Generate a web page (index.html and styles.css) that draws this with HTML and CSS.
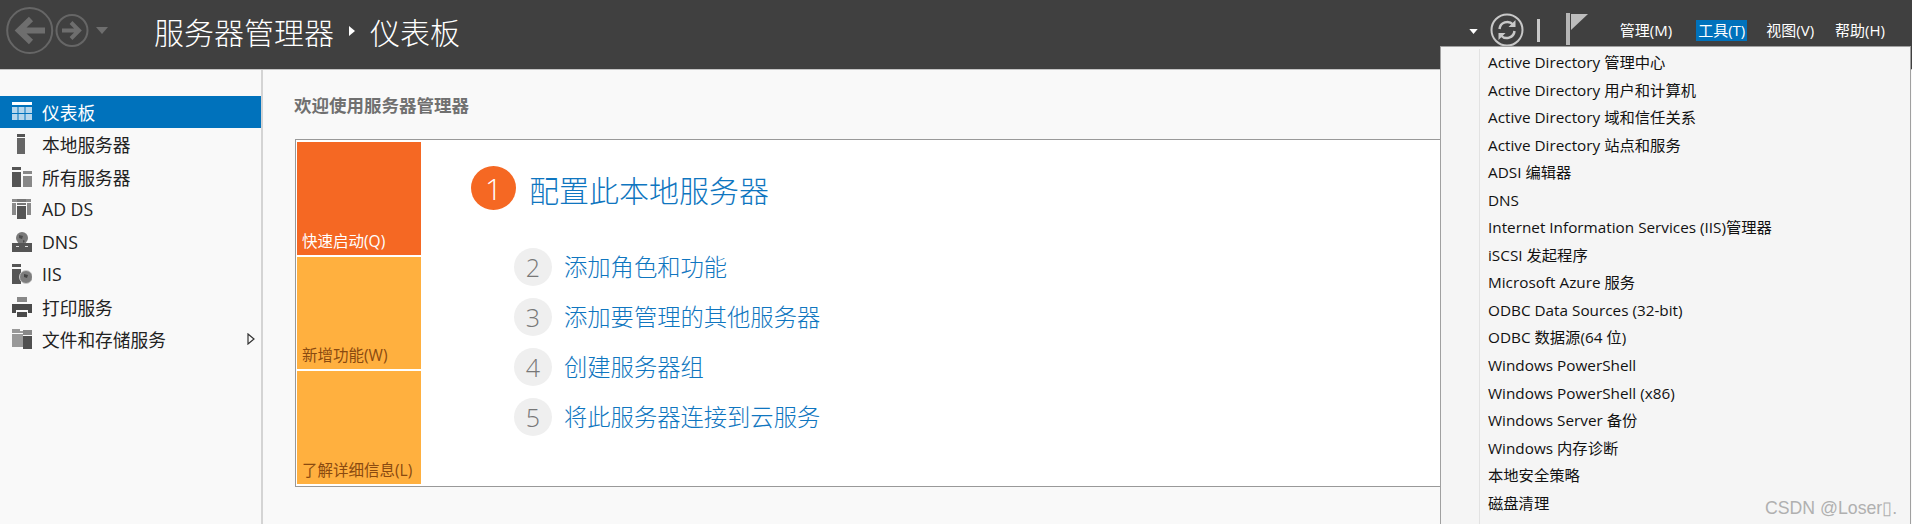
FILE: index.html
```html
<!DOCTYPE html>
<html lang="zh-CN">
<head>
<meta charset="utf-8">
<title>服务器管理器</title>
<link rel="stylesheet" href="styles.css">
</head>
<body>
<header class="topbar">
  <div class="nav-buttons">
    <svg class="ico-nav" width="120" height="69" viewBox="0 0 120 69">
      <circle cx="29.700" cy="30.500" r="22.500" fill="none" stroke="#666" stroke-width="2"/>
      <path d="M45 30.500H21M31 19L19 30.500 31 42" fill="none" stroke="#6e6e6e" stroke-width="6"/>
      <circle cx="72" cy="30.500" r="15.500" fill="none" stroke="#666" stroke-width="2"/>
      <path d="M62 30.500h17M71 22.500l8 8-8 8" fill="none" stroke="#6e6e6e" stroke-width="4"/>
      <path d="M96 27h12l-6 7z" fill="#6e6e6e"/>
    </svg>
  </div>
  <div class="crumbs">
    <span>服务器管理器</span>
    <svg class="crumb-arrow" width="8" height="12" viewBox="0 0 8 12"><path d="M1 1l6 5-6 5z" fill="#fff"/></svg>
    <span>仪表板</span>
  </div>
  <div class="actions">
    <svg class="act-drop" width="9" height="5" viewBox="0 0 10 6"><path d="M0 0h10L5 6z" fill="#fff"/></svg>
    <svg class="act-refresh" width="34" height="34" viewBox="0 0 34 34">
      <circle cx="17" cy="17" r="15.500" fill="none" stroke="#c8c8c8" stroke-width="2"/>
      <path d="M9.500 16a7.800 7.800 0 0 1 13.500-4.500M24.500 18a7.800 7.800 0 0 1-13.500 4.500" fill="none" stroke="#c8c8c8" stroke-width="2.500"/>
      <path d="M25.500 7v7h-7zM8.500 27v-7h7z" fill="#c8c8c8"/>
    </svg>
    <span class="act-sep"></span>
    <svg class="act-flag" width="22" height="32" viewBox="0 0 22 32"><path d="M0 0h4v32H0z" fill="#b5b5b5"/><path d="M5 1h17L5 17z" fill="#bdbdbd"/></svg>
    <nav class="menubar">
      <span class="menu-item">管理(M)</span>
      <span class="menu-item is-open">工具(T)</span>
      <span class="menu-item">视图(V)</span>
      <span class="menu-item">帮助(H)</span>
    </nav>
  </div>
</header>

<div class="body-row">
  <aside class="sidebar">
    <ul class="side-list">
      <li class="side-item is-active">
        <svg class="side-ico" width="20" height="20" viewBox="0 0 20 20"><path d="M0 0h20v3H0z" fill="#fff"/><path d="M0 5h5.500v6H0zM6.500 5h6v6h-6zM13.500 5H20v6h-6.500zM0 12h5.500v6H0zM6.500 12h6v6h-6zM13.500 12H20v6h-6.500z" fill="#b5d6ec"/></svg>
        <span>仪表板</span>
      </li>
      <li class="side-item">
        <svg class="side-ico" width="20" height="20" viewBox="0 0 20 20"><path d="M5 0h8v3H5z" fill="#555"/><path d="M5 4h8v16H5z" fill="#666"/></svg>
        <span>本地服务器</span>
      </li>
      <li class="side-item">
        <svg class="side-ico" width="20" height="20" viewBox="0 0 20 20"><path d="M0 0h9v3H0zM0 5h9v15H0z" fill="#555"/><path d="M11 4h9v3h-9zM11 9h9v11h-9z" fill="#888"/></svg>
        <span>所有服务器</span>
      </li>
      <li class="side-item">
        <svg class="side-ico" width="20" height="20" viewBox="0 0 20 20"><path d="M0 0h5v3H0zM14 0h5v3h-5zM0 4h4v12H0zM15 4h4v12h-4z" fill="#8a8a8a"/><path d="M5 0h9v3H5zM5 4h9v2H5z" fill="#777"/><path d="M5 7h9v13H5z" fill="#555"/></svg>
        <span>AD DS</span>
      </li>
      <li class="side-item">
        <svg class="side-ico" width="20" height="20" viewBox="0 0 20 20"><circle cx="10" cy="6" r="6" fill="#7a7a7a"/><path d="M7 3l4 1-1 3-3-1zM11 8l2 1-2 2z" fill="#4c4c4c"/><path d="M0 11h20v9H0z" fill="#555"/><path d="M4 14h3v1H4zM13 14h3v1h-3z" fill="#ddd"/></svg>
        <span>DNS</span>
      </li>
      <li class="side-item">
        <svg class="side-ico" width="20" height="20" viewBox="0 0 20 20"><path d="M0 0h9v3H0zM0 5h9v15H0z" fill="#555"/><circle cx="14" cy="13" r="6.500" fill="#7d7d7d" stroke="#ccc"/><path d="M12 10l4 1-1 3-3-1z" fill="#444"/></svg>
        <span>IIS</span>
      </li>
      <li class="side-item">
        <svg class="side-ico" width="20" height="20" viewBox="0 0 20 20"><path d="M5 0h10v5H5z" fill="#888"/><path d="M0 7h20v9h-4v-3H4v3H0z" fill="#4a4a4a"/><path d="M5 15h10v5H5z" fill="#4a4a4a"/></svg>
        <span>打印服务</span>
      </li>
      <li class="side-item">
        <svg class="side-ico" width="20" height="20" viewBox="0 0 20 20"><path d="M0 0h8v2h4v2H0zM0 5h11v13H0z" fill="#999"/><path d="M11 1h9v5h-9z" fill="#888"/><path d="M11 7h9v13h-9z" fill="#4f4f4f"/></svg>
        <span>文件和存储服务</span>
        <svg class="side-more" width="8" height="12" viewBox="0 0 8 12"><path d="M1 1l6 5-6 5z" fill="none" stroke="#333" stroke-width="1.200"/></svg>
      </li>
    </ul>
  </aside>

  <main class="content">
    <h1 class="welcome">欢迎使用服务器管理器</h1>
    <section class="card">
      <div class="tiles">
        <div class="tile tile-start">快速启动(Q)</div>
        <div class="tile tile-new">新增功能(W)</div>
        <div class="tile tile-learn">了解详细信息(L)</div>
      </div>
      <div class="steps">
        <div class="step-main">
          <span class="num-main">1</span>
          <span class="link-main">配置此本地服务器</span>
        </div>
        <ol class="step-list">
          <li class="step"><span class="num">2</span><span class="link">添加角色和功能</span></li>
          <li class="step"><span class="num">3</span><span class="link">添加要管理的其他服务器</span></li>
          <li class="step"><span class="num">4</span><span class="link">创建服务器组</span></li>
          <li class="step"><span class="num">5</span><span class="link">将此服务器连接到云服务</span></li>
        </ol>
      </div>
    </section>
  </main>
</div>

<div class="dropdown">
  <ul class="drop-list">
    <li>Active Directory 管理中心</li>
    <li>Active Directory 用户和计算机</li>
    <li>Active Directory 域和信任关系</li>
    <li>Active Directory 站点和服务</li>
    <li>ADSI 编辑器</li>
    <li>DNS</li>
    <li>Internet Information Services (IIS)管理器</li>
    <li>iSCSI 发起程序</li>
    <li>Microsoft Azure 服务</li>
    <li>ODBC Data Sources (32-bit)</li>
    <li>ODBC 数据源(64 位)</li>
    <li>Windows PowerShell</li>
    <li>Windows PowerShell (x86)</li>
    <li>Windows Server 备份</li>
    <li>Windows 内存诊断</li>
    <li>本地安全策略</li>
    <li>磁盘清理</li>
  </ul>
</div>
<div class="watermark">CSDN @Loser▯.</div>
</body>
</html>
```
FILE: styles.css
```css
* { box-sizing: border-box; }
html, body { margin: 0; padding: 0; height: 100%; overflow: hidden; }
body {
  width: 1912px;
  height: 524px;
  background: #f9f9f9;
  font-family: "Open Sans", "Noto Sans CJK SC", sans-serif;
  color: #222;
  display: flex;
  flex-direction: column;
}
ul, ol { list-style: none; margin: 0; padding: 0; }

.topbar {
  flex: 0 0 70px;
  height: 70px;
  background: #404040;
  border-bottom: 1px solid #c4c4c4;
  display: flex;
  align-items: flex-start;
}
.nav-buttons { width: 154px; flex: none; height: 69px; }
.ico-nav { display: block; }
.crumbs {
  display: flex;
  align-items: center;
  height: 62px;
  font-size: 30px;
  color: #fff;
  gap: 14px;
  font-weight: 300;
}
.actions {
  margin-left: auto;
  height: 60px;
  display: flex;
  align-items: center;
  padding-right: 25px;
}
.act-drop { margin-right: 12px; margin-top: 2px; }
.act-sep { width: 3px; height: 23px; background: #c8c8c8; margin: 0 26px 0 13px; }
.act-flag { margin-top: -2px; margin-right: 30px; }
.menubar { display: flex; gap: 17px; align-items: center; margin-top: 1px; }
.menu-item {
  font-size: 15px;
  line-height: 21px;
  color: #fff;
  padding: 0 2px;
  white-space: nowrap;
}
.menu-item.is-open { background: #0072bc; margin-left: 5px; }

.body-row { flex: 1; display: flex; min-height: 0; }
.sidebar {
  flex: 0 0 263px;
  width: 263px;
  border-right: 2px solid #d4d4d4;
  padding-top: 26px;
}
.side-item {
  height: 32.500px;
  display: flex;
  align-items: center;
  padding-left: 12px;
  gap: 10px;
  font-size: 17.700px;
  color: #222;
  white-space: nowrap;
}
.side-item.is-active { background: #0072bc; color: #fff; height: 32px; }
.side-ico { flex: none; }
.side-more { margin-left: auto; margin-right: 6px; }

.content { flex: 1; min-width: 0; padding: 23px 12px 0 32px; }
.welcome {
  margin: 0 0 22px -1px;
  font-size: 17.500px;
  line-height: 24px;
  font-weight: 700;
  color: #707070;
}
.card {
  height: 348px;
  background: #fff;
  border: 1px solid #999;
  padding: 2px 0 2px 1px;
  display: flex;
}
.tiles {
  flex: 0 0 123.500px;
  display: flex;
  flex-direction: column;
  gap: 2px;
}
.tile {
  flex: 1;
  display: flex;
  align-items: flex-end;
  padding: 0 0 4px 5px;
  font-size: 15.500px;
  line-height: 20px;
  white-space: nowrap;
  background: #ffb03f;
  color: #8a4a10;
}
.tile-start { background: #f56823; color: #fff; }

.steps { flex: 1; padding: 24px 0 0 50.500px; }
.step-main { display: flex; align-items: center; gap: 13px; height: 44px; }
.num-main {
  width: 45px;
  height: 44px;
  border-radius: 50%;
  background: #f56823;
  color: #fff;
  display: flex;
  align-items: center;
  justify-content: center;
  font-size: 30px;
  font-weight: 300;
}
.link-main { font-size: 30px; color: #0f76c0; font-weight: 300; margin-top: 1px; }
.step-list {
  margin-top: 38px;
  padding-left: 43px;
  display: flex;
  flex-direction: column;
  gap: 12px;
}
.step { display: flex; align-items: center; gap: 12px; height: 38px; }
.num {
  width: 38px;
  height: 38px;
  border-radius: 50%;
  background: #efefef;
  color: #777;
  display: flex;
  align-items: center;
  justify-content: center;
  font-size: 25px;
  font-weight: 300;
}
.link { font-size: 23.300px; color: #0f76c0; font-weight: 300; margin-top: -2px; }

.dropdown {
  position: absolute;
  left: 1440px;
  top: 46px;
  width: 471px;
  height: 478px;
  background: #f5f5f5;
  border: 1px solid #a0a0a0;
  border-bottom: 0;
  padding: 2px 0 0 38px;
}
.drop-list {
  border-left: 1px solid #e2e2e2;
  height: 100%;
  padding-left: 8px;
}
.drop-list li {
  height: 27.550px;
  line-height: 27.550px;
  font-size: 15.300px;
  color: #111;
  white-space: nowrap;
}
.watermark {
  position: absolute;
  left: 1765px;
  top: 496px;
  font-size: 17.700px;
  line-height: 24px;
  color: #b0b0b0;
  font-family: "Liberation Sans", sans-serif;
  white-space: nowrap;
}
```
